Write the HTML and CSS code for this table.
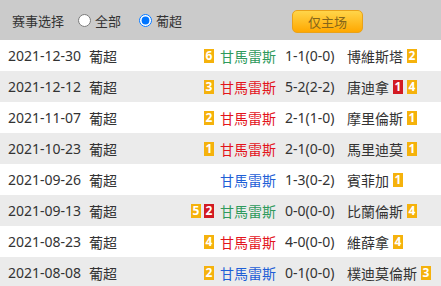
FILE: index.html
```html
<!DOCTYPE html>
<html lang="zh">
<head>
<meta charset="utf-8">
<link rel="stylesheet" href="styles.css">
</head>
<body>
<div class="panel">
  <div class="filter">
    <span class="label">赛事选择</span>
    <label class="opt"><input type="radio" name="lg"><span>全部</span></label>
    <label class="opt second"><input type="radio" name="lg" checked><span>葡超</span></label>
    <button class="home-only">仅主场</button>
  </div>
  <div class="rows">
    <div class="row">
      <span class="date">2021-12-30</span><span class="lg">葡超</span>
      <span class="home"><i class="b y">6</i><b class="green">甘馬雷斯</b></span>
      <span class="score">1-1(0-0)</span>
      <span class="away">博維斯塔<i class="b y">2</i></span>
    </div>
    <div class="row alt">
      <span class="date">2021-12-12</span><span class="lg">葡超</span>
      <span class="home"><i class="b y">3</i><b class="red">甘馬雷斯</b></span>
      <span class="score">5-2(2-2)</span>
      <span class="away">唐迪拿<i class="b r">1</i><i class="b y">4</i></span>
    </div>
    <div class="row">
      <span class="date">2021-11-07</span><span class="lg">葡超</span>
      <span class="home"><i class="b y">2</i><b class="red">甘馬雷斯</b></span>
      <span class="score">2-1(1-0)</span>
      <span class="away">摩里倫斯<i class="b y">1</i></span>
    </div>
    <div class="row alt">
      <span class="date">2021-10-23</span><span class="lg">葡超</span>
      <span class="home"><i class="b y">1</i><b class="red">甘馬雷斯</b></span>
      <span class="score">2-1(0-0)</span>
      <span class="away">馬里迪莫<i class="b y">1</i></span>
    </div>
    <div class="row">
      <span class="date">2021-09-26</span><span class="lg">葡超</span>
      <span class="home"><b class="blue">甘馬雷斯</b></span>
      <span class="score">1-3(0-2)</span>
      <span class="away">賓菲加<i class="b y">1</i></span>
    </div>
    <div class="row alt">
      <span class="date">2021-09-13</span><span class="lg">葡超</span>
      <span class="home"><i class="b y">5</i><i class="b r">2</i><b class="green">甘馬雷斯</b></span>
      <span class="score">0-0(0-0)</span>
      <span class="away">比蘭倫斯<i class="b y">4</i></span>
    </div>
    <div class="row">
      <span class="date">2021-08-23</span><span class="lg">葡超</span>
      <span class="home"><i class="b y">4</i><b class="red">甘馬雷斯</b></span>
      <span class="score">4-0(0-0)</span>
      <span class="away">維薛拿<i class="b y">4</i></span>
    </div>
    <div class="row alt">
      <span class="date">2021-08-08</span><span class="lg">葡超</span>
      <span class="home"><i class="b y">2</i><b class="blue">甘馬雷斯</b></span>
      <span class="score">0-1(0-0)</span>
      <span class="away">樸迪莫倫斯<i class="b y">3</i></span>
    </div>
  </div>
</div>
</body>
</html>
```

FILE: styles.css
```css
* { box-sizing: border-box; }
html, body { margin: 0; padding: 0; background: #fff; }
body {
  font-family: "Noto Sans", "Noto Sans CJK SC", sans-serif;
  color: #333;
  font-size: 14px;
}
.panel { width: 441px; }
.filter {
  height: 40px;
  background: #cbcbcb;
  display: flex;
  align-items: center;
  padding-left: 12px;
  font-size: 13px;
  color: #333;
}
.label { margin-right: 11px; }
.opt { display: flex; align-items: center; }
.opt input { margin: 0 4px 0 3px; width: 13px; height: 13px; }
.opt.second { margin-left: 15px; }
.home-only {
  margin-left: auto;
  margin-right: 78px;
  width: 71px;
  height: 23px;
  border: 1px solid #e9a21a;
  border-radius: 5px;
  background: linear-gradient(#ffd54a, #ffa800);
  color: #85661a;
  font-family: "Noto Sans CJK SC", sans-serif;
  font-size: 13px;
  padding: 0;
  margin-top: 2px;
}
.row {
  height: 31px;
  display: grid;
  grid-template-columns: 81px 50px 137px 71px 1fr;
  align-items: center;
  padding-left: 8px;
  white-space: nowrap;
}
.rows { padding-top: 0; }
.row.alt { background: #ebebeb; }
.home { display: flex; justify-content: flex-end; align-items: center; }
.home b { font-weight: normal; margin-left: 6px; }
.home .b + .b { margin-left: 3px; }
.score { padding-left: 9px; }
.away { display: flex; align-items: center; }
.away .b { margin-left: 4px; }
.b {
  font-style: normal;
  display: inline-block;
  width: 10px;
  height: 14px;
  line-height: 14px;
  font-size: 12px;
  text-align: center;
  color: #fff;
  font-weight: bold;
}
.b.y { background: #f5b20c; }
.b.r { background: #d21a22; }
.green { color: #2e9a5c; }
.red { color: #e3141c; }
.blue { color: #1f5fd6; }
```
